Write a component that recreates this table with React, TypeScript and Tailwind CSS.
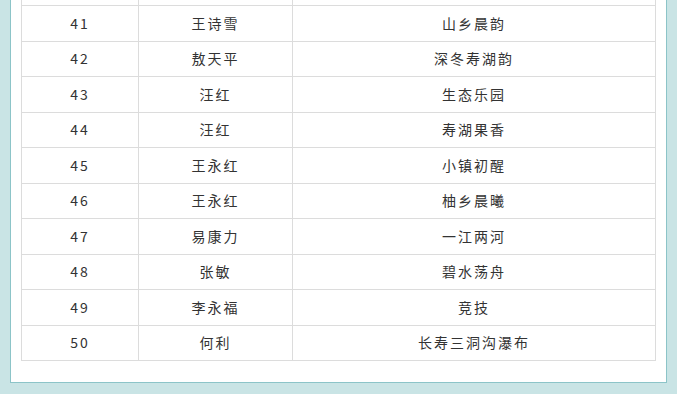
import React from "react";

const rows = [
  { no: 41, name: "王诗雪", title: "山乡晨韵" },
  { no: 42, name: "敖天平", title: "深冬寿湖韵" },
  { no: 43, name: "汪红", title: "生态乐园" },
  { no: 44, name: "汪红", title: "寿湖果香" },
  { no: 45, name: "王永红", title: "小镇初醒" },
  { no: 46, name: "王永红", title: "柚乡晨曦" },
  { no: 47, name: "易康力", title: "一江两河" },
  { no: 48, name: "张敏", title: "碧水荡舟" },
  { no: 49, name: "李永福", title: "竞技" },
  { no: 50, name: "何利", title: "长寿三洞沟瀑布" },
];

const cell = "flex items-center justify-center border-r border-[#dcdcdc]";

export default function App() {
  return (
    <div
      className="h-[394px] w-[677px] overflow-hidden bg-[#c9e4e5] pl-[10px] pr-[10px]"
      style={{ fontFamily: '"Noto Sans CJK SC", "Noto Sans", sans-serif' }}
    >
      <div className="border-x border-b border-[#8cc4c8] bg-white px-[10px] pb-[21px]">
        <div className="border-l border-[#dcdcdc] text-[14px] tracking-[2px] text-[#333]">
          {/* tail of the row above, scrolled out of view */}
          <div className="grid h-[6px] grid-cols-[117px_154px_363px] border-b border-[#dcdcdc]">
            <div className="border-r border-[#dcdcdc]" />
            <div className="border-r border-[#dcdcdc]" />
            <div className="border-r border-[#dcdcdc]" />
          </div>
          {rows.map((r) => (
            <div
              key={r.no}
              className="grid h-[35.5px] grid-cols-[117px_154px_363px] border-b border-[#dcdcdc]"
            >
              <div className={cell}>{r.no}</div>
              <div className={cell}>{r.name}</div>
              <div className={cell}>{r.title}</div>
            </div>
          ))}
        </div>
      </div>
    </div>
  );
}
